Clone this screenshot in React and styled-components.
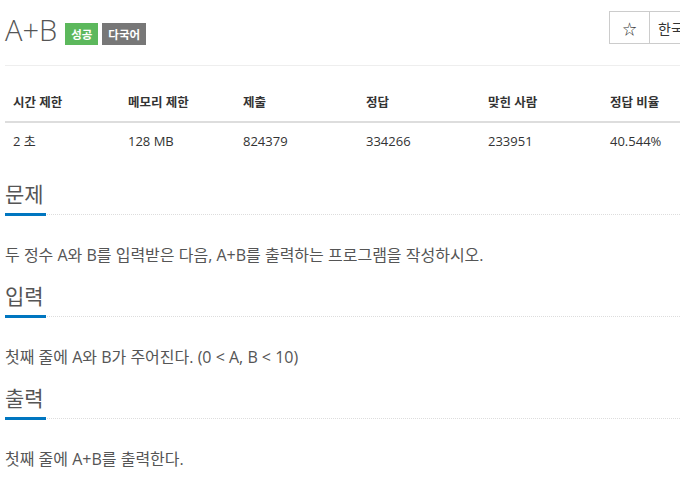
import React from 'react'
import styled, { createGlobalStyle } from 'styled-components';

const GlobalStyle = createGlobalStyle`
  body {
    margin: 0;
    background: #fff;
    font-family: "Open Sans", "Noto Sans CJK KR", sans-serif;
    color: #333;
  }
`;

const stats = [
    { label: '시간 제한', value: '2 초', width: 115 },
    { label: '메모리 제한', value: '128 MB', width: 115 },
    { label: '제출', value: '824379', width: 123 },
    { label: '정답', value: '334266', width: 122 },
    { label: '맞힌 사람', value: '233951', width: 122 },
    { label: '정답 비율', value: '40.544%', width: 120 },
];

const sections = [
    { title: '문제', text: '두 정수 A와 B를 입력받은 다음, A+B를 출력하는 프로그램을 작성하시오.' },
    { title: '입력', text: '첫째 줄에 A와 B가 주어진다. (0 < A, B < 10)' },
    { title: '출력', text: '첫째 줄에 A+B를 출력한다.' },
];

function App() {
    return (
        <Page>
            <GlobalStyle />
            <Header>
                <Title>A+B</Title>
                <Label color="#5cb85c">성공</Label>
                <Label color="#777">다국어</Label>
                <ButtonGroup>
                    <Button narrow>☆</Button>
                    <Button>한국어</Button>
                </ButtonGroup>
            </Header>
            <Table>
                <thead>
                    <tr>
                        {stats.map(item => (
                            <Th key={item.label} style={{ width: item.width - 16 }}>{item.label}</Th>
                        ))}
                    </tr>
                </thead>
                <tbody>
                    <tr>
                        {stats.map(item => (
                            <Td key={item.label}>{item.value}</Td>
                        ))}
                    </tr>
                </tbody>
            </Table>
            {sections.map(section => (
                <Section key={section.title}>
                    <SectionHeader>
                        <SectionTitle>{section.title}</SectionTitle>
                    </SectionHeader>
                    <SectionText>{section.text}</SectionText>
                </Section>
            ))}
        </Page>
    )
}

export default App;

const Page = styled.div`
  width: 717px;
  padding-left: 5px;
  overflow: hidden;
`;

const Header = styled.div`
  height: 65px;
  display: flex;
  align-items: flex-start;
  border-bottom: 1px solid #eee;
`;

const Title = styled.h1`
  margin: 10px 0 0;
  font-size: 29px;
  font-weight: 300;
  line-height: 40px;
  color: #555;
`;

const Label = styled.span`
  margin: 23px 0 0 4px;
  &:first-of-type {
    margin-left: 8px;
  }
  height: 22px;
  padding: 0 6px;
  display: inline-flex;
  align-items: center;
  background: ${props => props.color};
  color: #fff;
  font-size: 11.5px;
  font-weight: 700;
`;

const ButtonGroup = styled.div`
  margin: 11px 0 0 auto;
  display: flex;
`;

const Button = styled.div`
  height: 33px;
  box-sizing: border-box;
  width: ${props => (props.narrow ? '41px' : '72px')};
  padding-left: ${props => (props.narrow ? '0' : '8px')};
  display: flex;
  align-items: center;
  justify-content: ${props => (props.narrow ? 'center' : 'flex-start')};
  border: 1px solid #ccc;
  & + & {
    border-left: none;
  }
  font-size: 14px;
  color: #333;
`;

const Table = styled.table`
  margin-top: 19px;
  width: 717px;
  border-collapse: collapse;
  table-layout: fixed;
`;

const Th = styled.th`
  padding: 8px;
  text-align: left;
  font-size: 12.5px;
  font-weight: 700;
  line-height: 20px;
  border-bottom: 2px solid #ddd;
`;

const Td = styled.td`
  padding: 8px;
  font-size: 13px;
  line-height: 20px;
`;

const Section = styled.section`
  margin-top: 20px;
  & + & {
    margin-top: 14px;
  }
`;

const SectionHeader = styled.div`
  border-bottom: 1px dotted #ddd;
`;

const SectionTitle = styled.h2`
  display: inline-block;
  margin: 0 0 -2px;
  padding: 0 2px 4px 0;
  font-size: 21px;
  font-weight: 400;
  line-height: 30px;
  color: #555;
  border-bottom: 3px solid #0076c0;
`;

const SectionText = styled.p`
  margin: 28px 0 0;
  font-size: 16px;
  line-height: 24px;
  color: #555;
`;
